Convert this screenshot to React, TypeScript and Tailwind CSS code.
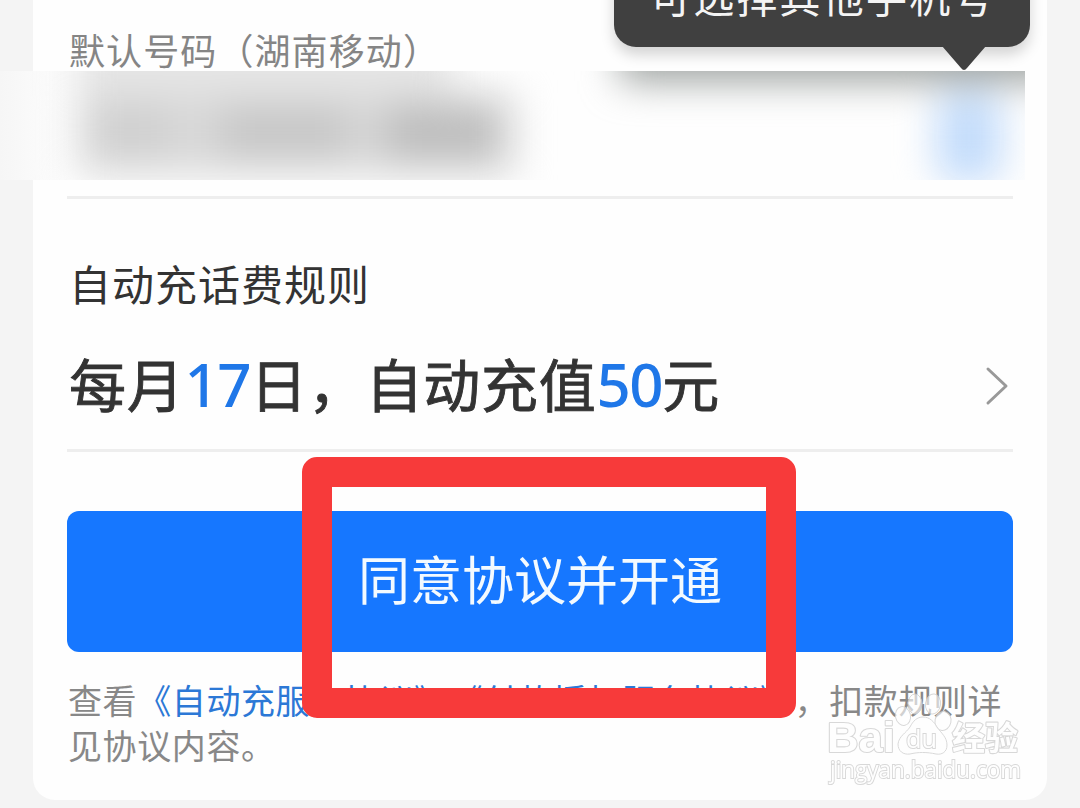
import React from "react";

function Tooltip() {
  return (
    <div className="absolute left-[614px] -top-[60px] flex h-[107px] w-[416px] flex-col rounded-[22px] bg-[#404040] shadow-[0_8px_14px_rgba(0,0,0,0.17)]">
      <p className="mt-[31px] whitespace-nowrap pl-[36px] text-[41px] leading-[48px] tracking-[2.2px] text-[#f4f4f4]">
        可选择其他手机号
      </p>
      <svg className="mt-[27px] ml-[328px] shrink-0" width="44" height="25" viewBox="0 0 44 25">
        <path d="M0 0H44L25 22Q22 26 19 22Z" fill="#404040" />
      </svg>
    </div>
  );
}

function MaskedNumber() {
  return (
    <svg className="relative -ml-[67px] h-[109px] w-[1025px] shrink-0" viewBox="0 0 1025 109">
      <defs>
        <linearGradient id="edge">
          <stop offset="0" stopColor="#f6f6f6" />
          <stop offset="0.07" stopColor="#fefefe" />
        </linearGradient>
        <filter id="soft" x="-200" y="-250" width="1500" height="600" filterUnits="userSpaceOnUse" colorInterpolationFilters="sRGB">
          <feGaussianBlur stdDeviation="19" />
        </filter>
      </defs>
      <rect width="1025" height="109" fill="url(#edge)" />
      <g filter="url(#soft)">
        <rect x="75" y="-60" width="380" height="85" fill="#e6e6e6" />
        <rect x="78" y="22" width="437" height="82" fill="#d9d9d9" />
        <rect x="95" y="38" width="75" height="44" fill="#cfcfcf" />
        <rect x="220" y="38" width="130" height="46" fill="#c6c6c6" />
        <rect x="385" y="36" width="112" height="52" fill="#bdbdbd" />
        <rect x="620" y="-70" width="520" height="80" fill="#9ba09e" />
        <rect x="936" y="20" width="66" height="92" rx="20" fill="#c3dcfb" />
      </g>
    </svg>
  );
}

function Watermark() {
  return (
    <svg
      className="absolute left-[826px] top-[690px] opacity-85"
      width="200"
      height="98"
      viewBox="0 0 200 98"
      fill="#fff"
      stroke="#d2d2d2"
      strokeWidth="1"
    >
      <g fillOpacity="0.72">
        <ellipse cx="77" cy="26" rx="7.5" ry="9.5" transform="rotate(-12 77 26)" />
        <ellipse cx="89" cy="14" rx="7" ry="10" />
        <ellipse cx="107" cy="14" rx="7.5" ry="10" transform="rotate(8 107 14)" />
        <ellipse cx="117" cy="31" rx="8" ry="9.5" transform="rotate(12 117 31)" />
        <path d="M97 27C104 27 108 32 111 37C115 43 121 47 121 55C121 62 116 65 110 64C101 62 92 62 84 64C77 65 72 61 72 54C73 46 80 43 84 37C87 31 91 27 97 27Z" />
      </g>
      <g className="font-bold" strokeWidth="2.2" paintOrder="stroke" strokeLinejoin="round">
        <text x="1" y="62" fontSize="43" textLength="68" lengthAdjust="spacingAndGlyphs" fontFamily="Liberation Sans, sans-serif">Bai</text>
        <text x="126" y="60" fontSize="33" textLength="66" fontFamily="Noto Sans CJK SC, sans-serif">经验</text>
      </g>
      <text x="80" y="58" fontSize="26" textLength="31" lengthAdjust="spacingAndGlyphs" fontFamily="Open Sans, sans-serif" strokeWidth="2" paintOrder="stroke">du</text>
      <text x="4" y="88" fontSize="24" textLength="191" lengthAdjust="spacingAndGlyphs" fontFamily="Open Sans, sans-serif" strokeWidth="2" paintOrder="stroke">jingyan.baidu.com</text>
    </svg>
  );
}

function Amount({ children }: { children: React.ReactNode }) {
  return (
    <span className="font-['Noto_Sans',sans-serif] text-[60px] font-medium leading-none tracking-[-1.4px] text-[#1f77e8] [-webkit-text-stroke:0px]">
      {children}
    </span>
  );
}

export default function App() {
  return (
    <main className="relative h-[808px] w-[1080px] overflow-hidden bg-[#f4f4f4] font-['Noto_Sans_CJK_SC',sans-serif]">
      <section className="mx-[33px] flex h-[800px] flex-col rounded-b-[22px] bg-[#fefefe] px-[34px] [text-spacing-trim:space-all]">
        <p className="h-[71px] shrink-0 whitespace-nowrap pl-[2px] pt-[25px] text-[36px] leading-[48px] tracking-[1.1px] text-[#858585]">
          默认号码（湖南移动）
        </p>
        <MaskedNumber />
        <div className="mt-[16px] flex h-[256px] shrink-0 flex-col border-y-[3px] border-[#eeeeee]">
          <h2 className="pl-[2px] pt-[54px] text-[42px] leading-[60px] tracking-[1px] text-[#333]">自动充话费规则</h2>
          <div className="flex items-center justify-between pt-[31px]">
            <p className="whitespace-nowrap pl-[2px] text-[57px] leading-[76px] tracking-[0.7px] text-[#333] [-webkit-text-stroke:0.9px_#333]">
              每月<Amount>17</Amount>日，自动充值<Amount>50</Amount>元
            </p>
            <svg className="mt-[8px] mr-[4px]" width="24" height="40" viewBox="0 0 24 40" fill="none" stroke="#999" strokeWidth="3" strokeLinecap="round" strokeLinejoin="round">
              <path d="M3 3L21 20L3 37" />
            </svg>
          </div>
        </div>
        <button className="mt-[59px] h-[141px] shrink-0 rounded-[12px] bg-[#1677ff] pb-[7px] text-[52px] leading-[70px] text-[#f3faff]">
          同意协议并开通
        </button>
        <p className="whitespace-nowrap pl-[1px] pt-[25px] text-[34px] leading-[45px] tracking-[0.6px] text-[#888]">
          查看<span className="text-[#2c78d6]">《自动充服务协议》《付款授权服务协议》</span>，扣款规则详
          <br />
          见协议内容。
        </p>
      </section>
      <Tooltip />
      <div className="absolute left-[302px] top-[457px] h-[261px] w-[494px] rounded-[15px] border-[30px] border-[#f73a3a]" />
      <Watermark />
    </main>
  );
}
